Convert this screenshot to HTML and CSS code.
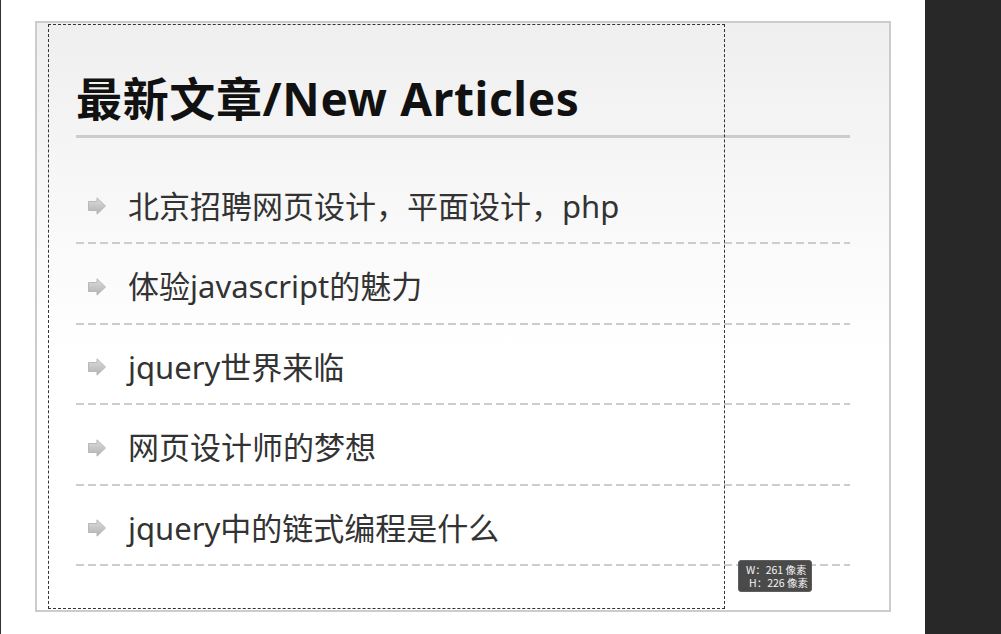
FILE: index.html
```html
<!DOCTYPE html>
<html lang="zh-CN">
<head>
<meta charset="utf-8">
<title>最新文章</title>
<link rel="stylesheet" href="styles.css">
</head>
<body>
<div class="page">
  <div class="edge"></div>
  <div class="canvas">
    <div class="panel">
      <div class="selection"></div>
      <h2 class="title">最新文章/New Articles</h2>
      <ul class="list">
        <li class="item"><span class="arrow"><svg width="18" height="18" viewBox="0 0 18 18"><defs><linearGradient id="ag" x1="0" y1="0" x2="0" y2="1"><stop offset="0" stop-color="#dcdcdc"/><stop offset="1" stop-color="#b2b2b2"/></linearGradient></defs><path d="M0.5 4.5H9V0.8L17.5 9L9 17.2V13.5H0.5Z" fill="url(#ag)" stroke="#b8b8b8" stroke-width="1"/></svg></span><span class="text">北京招聘网页设计，平面设计，php</span></li>
        <li class="item"><span class="arrow"><svg width="18" height="18" viewBox="0 0 18 18"><path d="M0.5 4.5H9V0.8L17.5 9L9 17.2V13.5H0.5Z" fill="url(#ag)" stroke="#b8b8b8" stroke-width="1"/></svg></span><span class="text">体验javascript的魅力</span></li>
        <li class="item"><span class="arrow"><svg width="18" height="18" viewBox="0 0 18 18"><path d="M0.5 4.5H9V0.8L17.5 9L9 17.2V13.5H0.5Z" fill="url(#ag)" stroke="#b8b8b8" stroke-width="1"/></svg></span><span class="text">jquery世界来临</span></li>
        <li class="item"><span class="arrow"><svg width="18" height="18" viewBox="0 0 18 18"><path d="M0.5 4.5H9V0.8L17.5 9L9 17.2V13.5H0.5Z" fill="url(#ag)" stroke="#b8b8b8" stroke-width="1"/></svg></span><span class="text">网页设计师的梦想</span></li>
        <li class="item"><span class="arrow"><svg width="18" height="18" viewBox="0 0 18 18"><path d="M0.5 4.5H9V0.8L17.5 9L9 17.2V13.5H0.5Z" fill="url(#ag)" stroke="#b8b8b8" stroke-width="1"/></svg></span><span class="text">jquery中的链式编程是什么</span></li>
      </ul>
      <div class="tip"><div class="tip-line">W：261 像素</div><div class="tip-line">H：226 像素</div></div>
    </div>
  </div>
  <div class="side"></div>
</div>
</body>
</html>
```

FILE: styles.css
```css
html, body {
  margin: 0;
  padding: 0;
  background: #ffffff;
}
.page {
  display: flex;
  width: 1001px;
  height: 634px;
  overflow: hidden;
}
.edge {
  width: 1px;
  background: #333333;
}
.canvas {
  flex: 1;
  padding: 21px 0 0 34px;
}
.side {
  width: 76px;
  background: #282828;
}
.panel {
  position: relative;
  box-sizing: border-box;
  width: 856px;
  height: 591px;
  border: 2px solid #cccccc;
  background: linear-gradient(to bottom, #efefef 0%, #ffffff 56%, #ffffff 100%);
  padding: 52px 39px 0 39px;
  font-family: "Noto Sans", "Noto Sans CJK SC", sans-serif;
}
.selection {
  position: absolute;
  left: 11px;
  top: 1px;
  width: 677px;
  height: 585px;
  border: 1px dashed #333333;
  box-sizing: border-box;
  pointer-events: none;
}
.title {
  margin: 0;
  font-size: 46px;
  line-height: 46px;
  font-weight: 700;
  color: #111111;
  padding-bottom: 14px;
  border-bottom: 3px solid #cccccc;
  letter-spacing: 0.65px;
}
.list {
  list-style: none;
  margin: 25.5px 0 0 0;
  padding: 0;
}
.item {
  display: flex;
  align-items: center;
  gap: 22px;
  height: 71.5px;
  padding: 7px 0 0 12px;
  border-bottom: 2px solid transparent;
  background-image: linear-gradient(to right, #cccccc 8px, transparent 8px);
  background-size: 12px 2px;
  background-repeat: repeat-x;
  background-position: left bottom;
  background-origin: border-box;
}
.arrow {
  display: flex;
  flex: none;
  width: 18px;
  height: 18px;
}
.text {
  font-size: 31px;
  line-height: 1;
  color: #333333;
}
.tip {
  position: absolute;
  left: 701px;
  top: 537px;
  width: 74px;
  height: 32px;
  box-sizing: border-box;
  padding: 2px 0 0 7px;
  background: #4a4a4a;
  border: 1px solid #5e5e5e;
  border-radius: 3px;
  color: #f4f4f4;
  font-family: "Noto Sans CJK SC", sans-serif;
  font-size: 10.5px;
  line-height: 13px;
}
.tip-line + .tip-line {
  padding-left: 3px;
}
```
